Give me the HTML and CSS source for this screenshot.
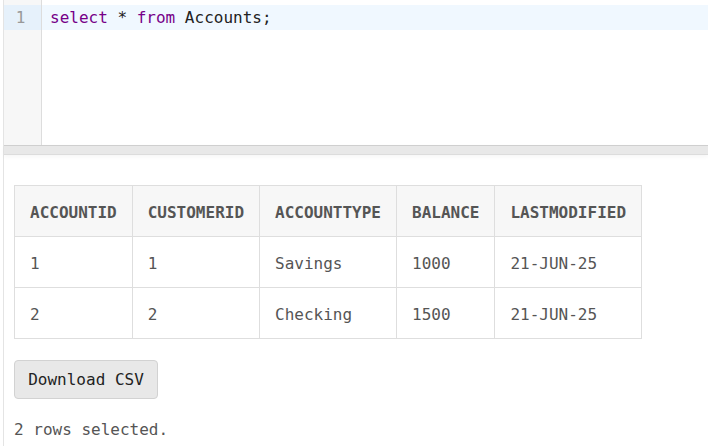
FILE: index.html
```html
<!DOCTYPE html>
<html>
<head>
<meta charset="utf-8">
<link rel="stylesheet" href="styles.css">
</head>
<body>
<div class="panel">
  <div class="editor">
    <div class="gutter">
      <div class="lineno active">1</div>
    </div>
    <div class="code">
      <div class="line active"><span class="kw">select</span> * <span class="kw">from</span> Accounts;</div>
    </div>
  </div>
  <div class="splitter"></div>
  <div class="results">
    <table class="grid">
      <thead>
        <tr><th>ACCOUNTID</th><th>CUSTOMERID</th><th>ACCOUNTTYPE</th><th>BALANCE</th><th>LASTMODIFIED</th></tr>
      </thead>
      <tbody>
        <tr><td>1</td><td>1</td><td>Savings</td><td>1000</td><td>21-JUN-25</td></tr>
        <tr><td>2</td><td>2</td><td>Checking</td><td>1500</td><td>21-JUN-25</td></tr>
      </tbody>
    </table>
    <button class="btn">Download CSV</button>
    <div class="status">2 rows selected.</div>
  </div>
</div>
</body>
</html>
```

FILE: styles.css
```css
html, body {
  margin: 0;
  padding: 0;
  background: #fff;
}
body {
  font-family: "DejaVu Sans Mono", "Liberation Mono", monospace;
  font-size: 16px;
  color: #555;
}
.panel {
  margin-left: 3px;
  min-height: 446px;
  border-left: 1px solid #e4e4e4;
  box-sizing: border-box;
}
.editor {
  display: flex;
  height: 145px;
  background: #fff;
}
.gutter {
  width: 37px;
  background: #f7f7f7;
  border-right: 1px solid #ddd;
  padding-top: 5px;
}
.lineno {
  height: 25px;
  line-height: 25px;
  color: #999;
  text-align: center;
  padding-right: 4px;
}
.lineno.active {
  background: #e6f1fb;
}
.code {
  flex: 1;
  padding-top: 5px;
}
.line {
  height: 25px;
  line-height: 25px;
  padding-left: 8px;
  color: #222;
}
.line.active {
  background: #f0f8ff;
}
.kw {
  color: #770088;
}
.splitter {
  height: 8px;
  background: #e8e8e8;
  border-top: 1px solid #cfcfcf;
  border-bottom: 1px solid #dcdcdc;
  box-shadow: 0 2px 4px rgba(0,0,0,0.04);
}
.results {
  padding: 30px 10px 0 10px;
}
.grid {
  border-collapse: collapse;
}
.grid th, .grid td {
  border: 1px solid #dedede;
  height: 51px;
  box-sizing: border-box;
  padding: 2px 15px 0 15px;
  text-align: left;
  vertical-align: middle;
  white-space: nowrap;
  color: #555;
}
.grid th {
  background: #f7f7f7;
  font-weight: bold;
}
.btn {
  display: block;
  margin-top: 21px;
  width: 144px;
  height: 39px;
  box-sizing: border-box;
  background: #e8e8e8;
  border: 1px solid #d2d2d2;
  border-radius: 4px;
  font-family: inherit;
  font-size: 16px;
  color: #222;
  padding: 0;
}
.status {
  margin-top: 21px;
  line-height: 20px;
  color: #555;
}
```
